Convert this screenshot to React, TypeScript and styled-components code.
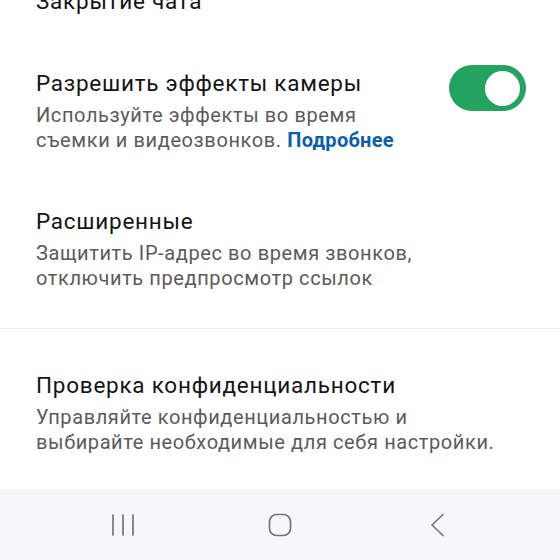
import React from "react";
import styled, { createGlobalStyle } from "styled-components";

const Global = createGlobalStyle`
  html, body { margin: 0; padding: 0; background: #ffffff; }
  body { font-family: Roboto, "Noto Sans", sans-serif; -webkit-font-smoothing: antialiased; }
`;

const Screen = styled.div`
  width: 560px;
  height: 560px;
  display: flex;
  flex-direction: column;
  overflow: hidden;
  background: #ffffff;
`;

const Scroller = styled.div`
  flex: 1;
  overflow: hidden;
`;

const Content = styled.div`
  margin-top: -40px;
  display: flex;
  flex-direction: column;
`;

const Group = styled.section<{ $padTop?: number; $padBottom?: number }>`
  display: flex;
  flex-direction: column;
  padding-top: ${(p) => p.$padTop ?? 0}px;
  padding-bottom: ${(p) => p.$padBottom ?? 0}px;
`;

const Divider = styled.div`
  height: 1px;
  background: #ececec;
`;

const Item = styled.div`
  display: flex;
  align-items: flex-start;
  gap: 16px;
  padding: 27px 34px 27px 36px;
`;

const TextBlock = styled.div`
  flex: 1;
  display: flex;
  flex-direction: column;
  min-width: 0;
  padding-right: 30px;
`;

const Title = styled.div`
  font-size: 22.5px;
  line-height: 28px;
  color: #141414;
  letter-spacing: 0.75px;
  white-space: nowrap;
`;

const Subtitle = styled.div`
  margin-top: 6px;
  font-size: 20px;
  line-height: 25px;
  color: #5b5b5b;
  letter-spacing: 0.6px;
`;

const Link = styled.span`
  color: #0a5fa8;
  font-weight: 700;
  letter-spacing: 0.3px;
`;

const Track = styled.div<{ $on: boolean }>`
  flex: none;
  width: 77px;
  height: 46px;
  margin-top: -4px;
  border-radius: 23px;
  background: ${(p) => (p.$on ? "#22a35f" : "#bdbdbd")};
  display: flex;
  align-items: center;
  justify-content: ${(p) => (p.$on ? "flex-end" : "flex-start")};
  padding: 0 6px;
  box-sizing: border-box;
`;

const Knob = styled.div`
  width: 35px;
  height: 35px;
  border-radius: 50%;
  background: #ffffff;
`;

const NavBar = styled.nav`
  flex: none;
  height: 71px;
  background: #f6f7f9;
  display: flex;
  justify-content: center;
  align-items: center;
`;

const NavButton = styled.div`
  width: 157px;
  height: 71px;
  display: flex;
  align-items: center;
  justify-content: center;
  color: #767676;
`;

const Toggle = ({ on }: { on: boolean }) => (
  <Track $on={on}>
    <Knob />
  </Track>
);

const RecentsIcon = () => (
  <svg width="24" height="24" viewBox="0 0 24 24" fill="none" stroke="currentColor" strokeWidth="1.7" strokeLinecap="round">
    <line x1="2" y1="2" x2="2" y2="22" />
    <line x1="12" y1="2" x2="12" y2="22" />
    <line x1="22" y1="2" x2="22" y2="22" />
  </svg>
);

const HomeIcon = () => (
  <svg width="24" height="24" viewBox="0 0 24 24" fill="none" stroke="currentColor" strokeWidth="1.7">
    <rect x="1.5" y="1.5" width="21" height="21" rx="7" />
  </svg>
);

const BackIcon = () => (
  <svg width="16" height="24" viewBox="0 0 16 24" fill="none" stroke="currentColor" strokeWidth="1.7" strokeLinecap="round" strokeLinejoin="round">
    <polyline points="14,1.5 3,12 14,22.5" />
  </svg>
);

export default function App() {
  return (
    <>
      <Global />
      <Screen>
        <Scroller>
          <Content>
            <Group $padBottom={10}>
              <Item>
                <TextBlock>
                  <Title>Закрытие чата</Title>
                </TextBlock>
              </Item>
              <Item>
                <TextBlock>
                  <Title>Разрешить эффекты камеры</Title>
                  <Subtitle>
                    Используйте эффекты во время съемки и видеозвонков. <Link>Подробнее</Link>
                  </Subtitle>
                </TextBlock>
                <Toggle on={true} />
              </Item>
              <Item>
                <TextBlock>
                  <Title>Расширенные</Title>
                  <Subtitle>
                    Защитить IP-адрес во время звонков, отключить предпросмотр ссылок
                  </Subtitle>
                </TextBlock>
              </Item>
            </Group>
            <Divider />
            <Group $padTop={15}>
              <Item>
                <TextBlock>
                  <Title>Проверка конфиденциальности</Title>
                  <Subtitle>
                    Управляйте конфиденциальностью и выбирайте необходимые для себя настройки.
                  </Subtitle>
                </TextBlock>
              </Item>
            </Group>
          </Content>
        </Scroller>
        <NavBar>
          <NavButton>
            <RecentsIcon />
          </NavButton>
          <NavButton>
            <HomeIcon />
          </NavButton>
          <NavButton>
            <BackIcon />
          </NavButton>
        </NavBar>
      </Screen>
    </>
  );
}
